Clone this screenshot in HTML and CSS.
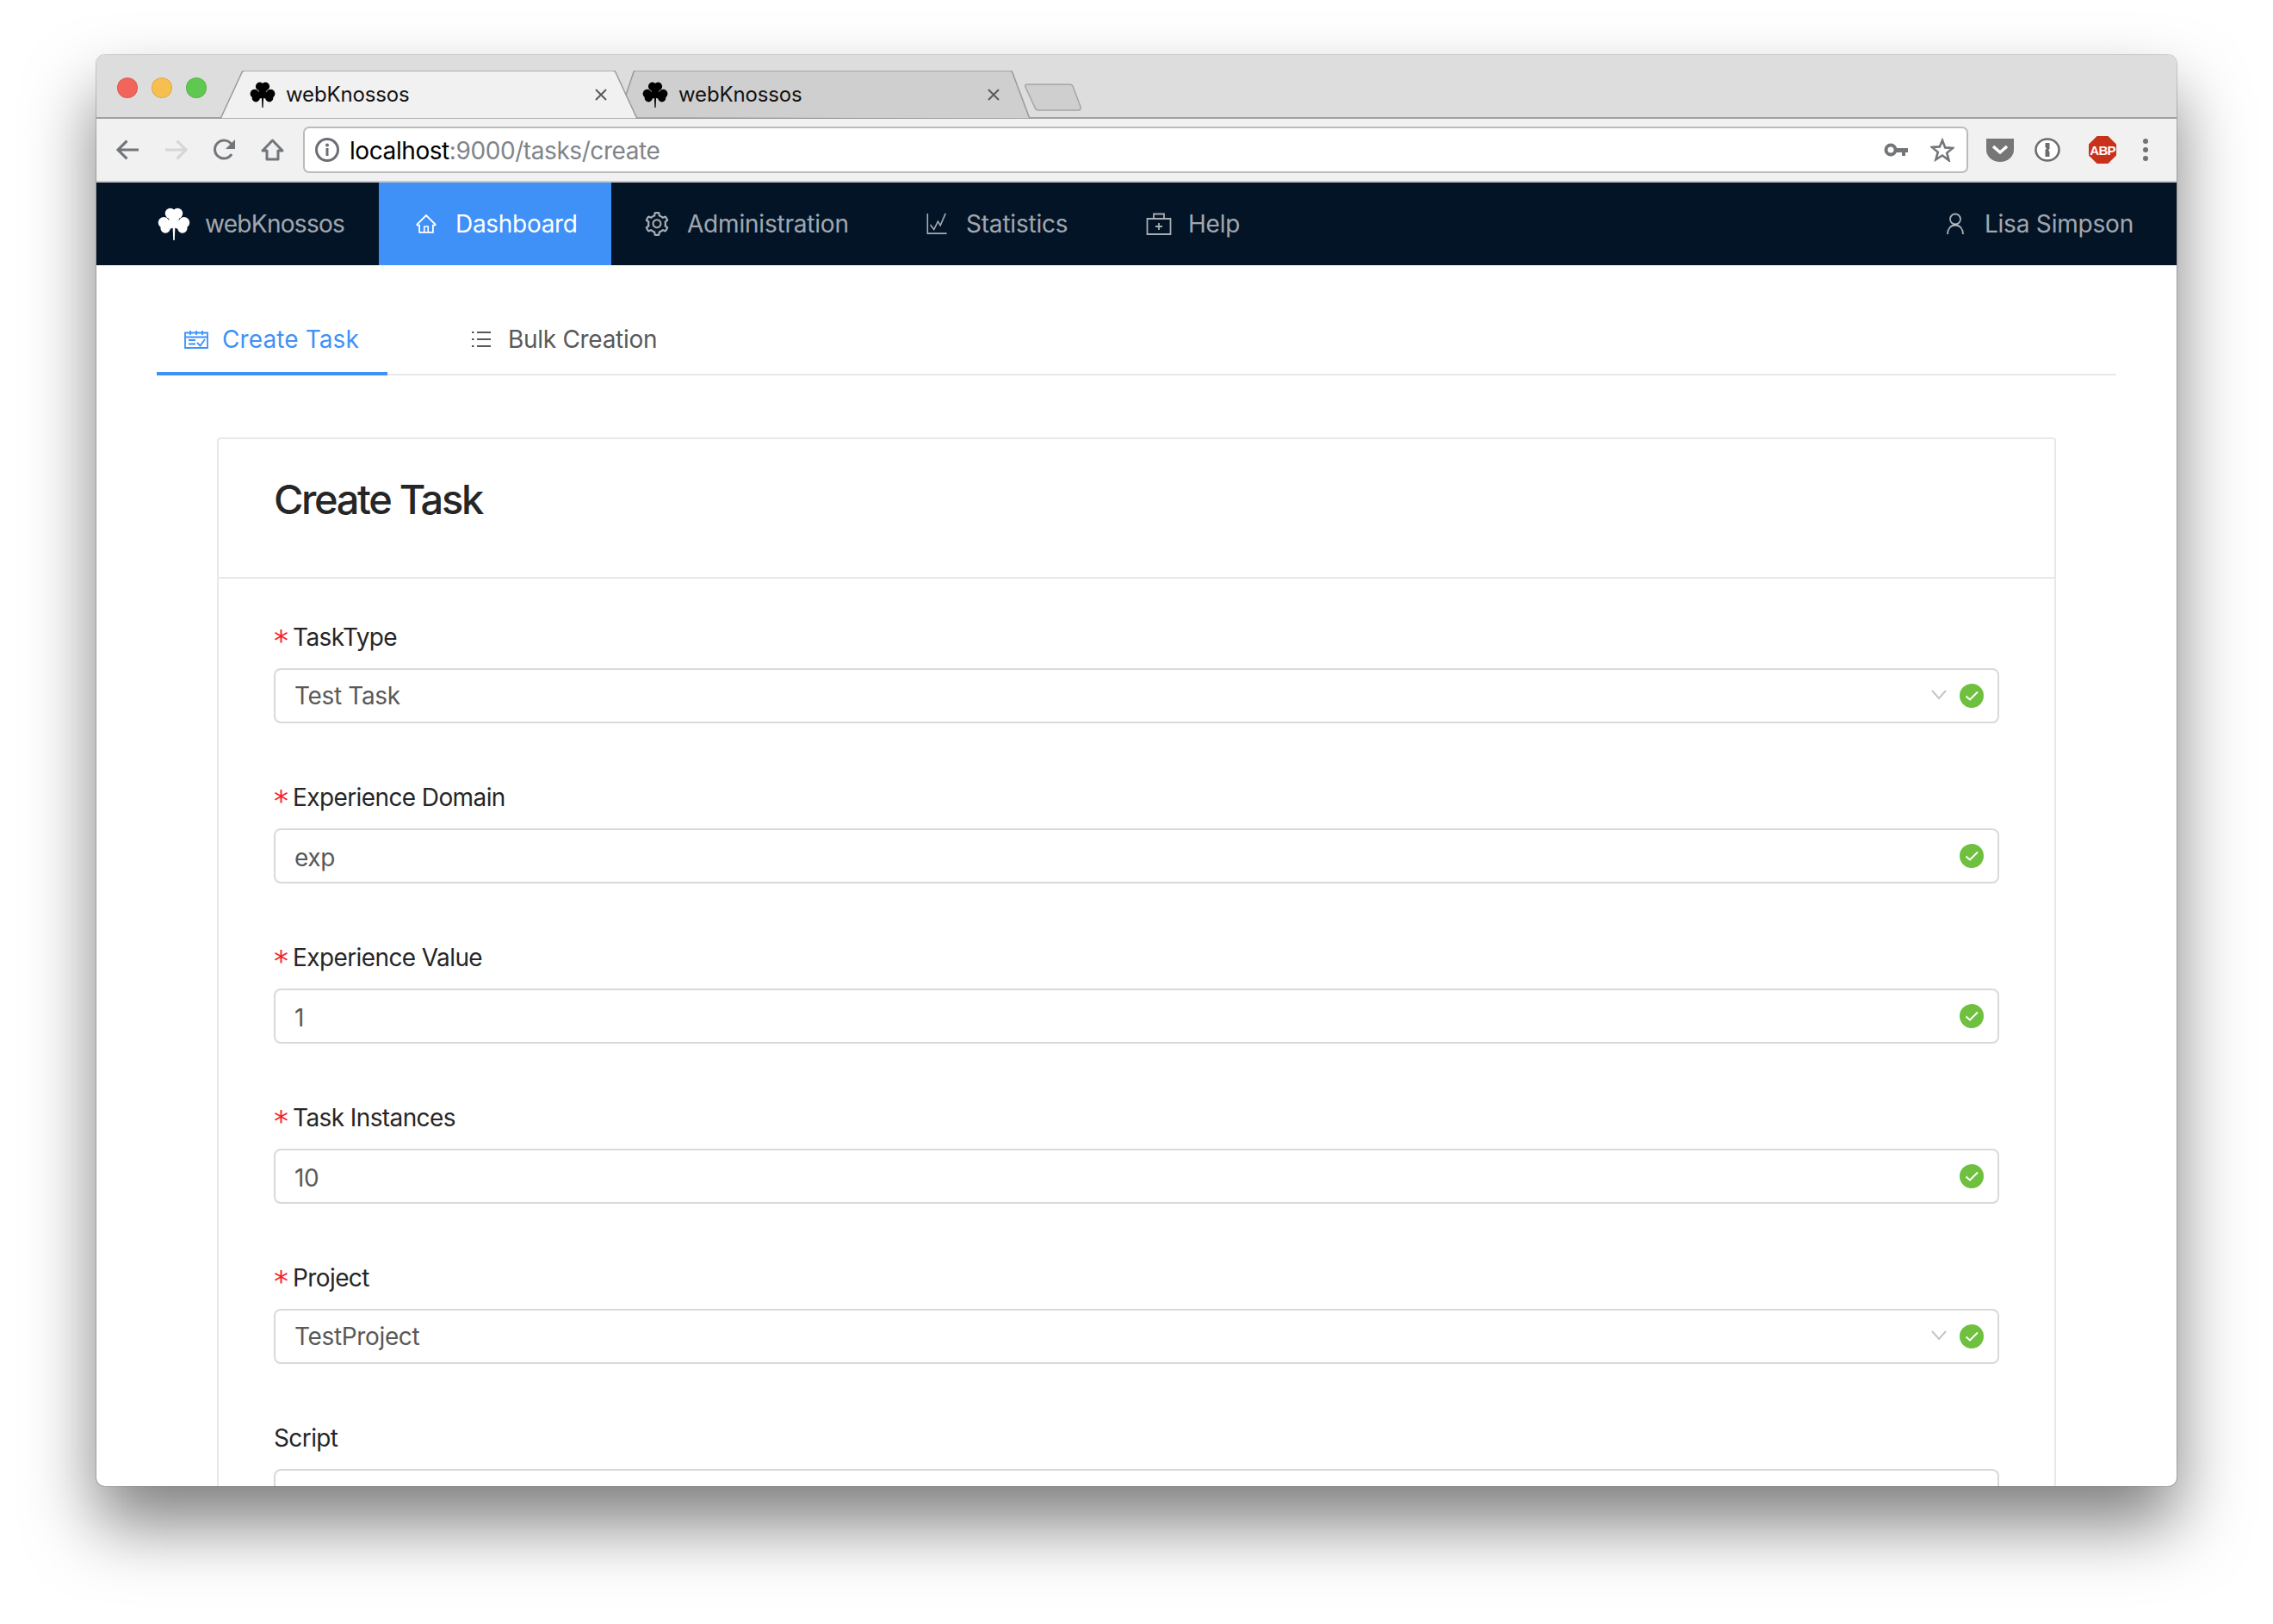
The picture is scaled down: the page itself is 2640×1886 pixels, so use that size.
FILE: index.html
```html
<!DOCTYPE html>
<html lang="en">
<head>
<meta charset="utf-8">
<title>webKnossos</title>
<link rel="stylesheet" href="styles.css">
</head>
<body>
<svg class="defs" width="0" height="0">
  <symbol id="clover" viewBox="0 0 100 100">
    <circle cx="39" cy="18" r="16"/><circle cx="61" cy="18" r="16"/>
    <circle cx="50" cy="32" r="16"/>
    <circle cx="19" cy="46" r="17"/><circle cx="24" cy="63" r="15"/>
    <circle cx="81" cy="46" r="17"/><circle cx="76" cy="63" r="15"/>
    <circle cx="38" cy="52" r="13"/><circle cx="62" cy="52" r="13"/>
    <path d="M46 50h8l-2 50h-4z"/>
  </symbol>
  <symbol id="ok" viewBox="0 0 28 28">
    <circle cx="14" cy="14" r="14" fill="#6fc03f"/>
    <path d="M7.500 14.500l4.500 4L21 9.500" fill="none" stroke="#fff" stroke-width="2"/>
  </symbol>
  <symbol id="chev" viewBox="0 0 18 12">
    <path d="M1 1l8 9 8-9" fill="none" stroke="#c4c4c4" stroke-width="2"/>
  </symbol>
  <symbol id="x" viewBox="0 0 16 16">
    <path d="M2 2l12 12M14 2L2 14" fill="none" stroke="#5a5a5a" stroke-width="2"/>
  </symbol>
</svg>

<div class="window">
  <div class="tabstrip">
    <div class="lights">
      <span class="light red"></span><span class="light amber"></span><span class="light green"></span>
    </div>
    <div class="tab inactive second">
      <svg class="tab-shape" viewBox="0 0 476 56" preserveAspectRatio="none"><path d="M0 55l10-24L20 1q1-1 3-1h430q2 0 3 2l20 54z" fill="#cfcfcf" stroke="#9a9a9a" stroke-width="1.500"/></svg>
      <svg class="favicon"><use href="#clover"/></svg><span class="tab-title">webKnossos</span><svg class="tab-x"><use href="#x"/></svg>
    </div>
    <div class="tab active">
      <svg class="tab-shape" viewBox="0 0 484 56" preserveAspectRatio="none"><path d="M0 56L25 2q1-2 3-2h428q2 0 3 2l25 54z" fill="#f1f1f1" stroke="#9a9a9a" stroke-width="1.500"/></svg>
      <svg class="favicon"><use href="#clover"/></svg><span class="tab-title">webKnossos</span><svg class="tab-x"><use href="#x"/></svg>
    </div>
    <svg class="newtab" viewBox="0 0 66 32"><path d="M3 1h49q3 0 4 2l9 24q1 4-3 4H16q-3 0-4-3L1 4Q0 1 3 1z" fill="#cfcfcf" stroke="#a5a5a5" stroke-width="1.500"/></svg>
  </div>

  <div class="toolbar">
    <div class="nav-buttons">
      <svg class="tb-icon" viewBox="0 0 26 24"><path d="M25 12H3M12 2L2 12l10 10" fill="none" stroke="#72757a" stroke-width="3"/></svg>
      <svg class="tb-icon" viewBox="0 0 26 24"><path d="M1 12h22M14 2l10 10-10 10" fill="none" stroke="#d6d6d6" stroke-width="3"/></svg>
      <svg class="tb-icon" viewBox="0 0 27 26"><path d="M22 18a10.500 10.500 0 1 1 0-11" fill="none" stroke="#72757a" stroke-width="3"/><path d="M26 1v11H15z" fill="#72757a"/></svg>
      <svg class="tb-icon" viewBox="0 0 27 26"><path d="M13.500 2L2 14h5v10h13V14h5z" fill="none" stroke="#72757a" stroke-width="3" stroke-linejoin="round"/></svg>
    </div>
    <div class="omnibox">
      <svg class="info" viewBox="0 0 28 28"><circle cx="14" cy="14" r="12.500" fill="none" stroke="#6b6e73" stroke-width="3"/><circle cx="14" cy="8.500" r="2" fill="#6b6e73"/><path d="M12.500 12h3v9h-3z" fill="#6b6e73"/></svg>
      <span class="url"><span class="host">localhost</span>:9000/tasks/create</span>
      <svg class="key" viewBox="0 0 28 16"><circle cx="8" cy="8" r="5.500" fill="none" stroke="#72757a" stroke-width="4"/><path d="M14 6h14v5h-3v4h-4v-4h-7z" fill="#72757a"/></svg>
      <svg class="star" viewBox="0 0 28 28"><path d="M14 3l3.200 8.400 9 .5-7 5.700 2.400 8.700L14 20.500l-7.600 4.800 2.400-8.700-7-5.700 9-.5z" fill="none" stroke="#72757a" stroke-width="2.600"/></svg>
    </div>
    <div class="extensions">
      <svg class="ext pocket" viewBox="0 0 32 28"><path d="M0 1h32v13a16 14 0 0 1-32 0z" fill="#767676"/><path d="M8 10l8 7 8-7" fill="none" stroke="#fff" stroke-width="3.500"/></svg>
      <svg class="ext onepw" viewBox="0 0 30 28"><ellipse cx="15" cy="14" rx="13.500" ry="12.500" fill="#fff" stroke="#6c6c6c" stroke-width="2.600"/><path d="M12.500 6h5v7l-1.500 1.500 1.500 1.500v6h-5v-8l1.500-1.500-1.500-1.500z" fill="#6c6c6c"/></svg>
      <div class="abp"><span>ABP</span></div>
      <div class="kebab"><i></i><i></i><i></i></div>
    </div>
  </div>

  <nav class="navbar">
    <a class="brand"><svg class="brand-icon"><use href="#clover"/></svg><span>webKnossos</span></a>
    <a class="menu-item selected">
      <svg class="menu-icon" viewBox="0 0 1024 1024"><path fill="currentColor" d="M946.5 505L560.1 118.8l-25.9-25.9a31.5 31.5 0 0 0-44.4 0L77.5 505a63.9 63.9 0 0 0-18.8 46c.4 35.2 29.7 63.3 64.9 63.3h42.5V940h691.8V614.3h43.4c17.1 0 33.2-6.7 45.3-18.8a63.6 63.6 0 0 0 18.7-45.3c0-17-6.7-33.1-18.8-45.2zM568 868H456V664h112v204zm217.9-325.7V868H632V640c0-22.1-17.9-40-40-40H432c-22.1 0-40 17.9-40 40v228H238.1V542.3h-96l370-369.7 23.1 23.1L882 542.3h-96.1z"/></svg>
      <span>Dashboard</span>
    </a>
    <a class="menu-item admin">
      <svg class="menu-icon" viewBox="0 0 1024 1024"><path fill="currentColor" d="M924.8 625.7l-65.5-56c3.1-19 4.7-38.4 4.7-57.8s-1.6-38.8-4.7-57.8l65.5-56a32.03 32.03 0 0 0 9.3-35.2l-.9-2.6a443.74 443.74 0 0 0-79.7-137.9l-1.8-2.1a32.12 32.12 0 0 0-35.1-9.5l-81.3 28.9c-30-24.6-63.5-44-99.7-57.6l-15.7-85a32.05 32.05 0 0 0-25.8-25.7l-2.7-.5c-52.1-9.4-106.9-9.4-159 0l-2.7.5a32.05 32.05 0 0 0-25.8 25.7l-15.8 85.4a351.86 351.86 0 0 0-99 57.4l-81.9-29.1a32 32 0 0 0-35.1 9.5l-1.8 2.1a446.02 446.02 0 0 0-79.7 137.9l-.9 2.6c-4.5 12.5-.8 26.5 9.3 35.2l66.3 56.6c-3.1 18.8-4.6 38-4.6 57.1 0 19.2 1.5 38.4 4.6 57.1L99 625.5a32.03 32.03 0 0 0-9.3 35.2l.9 2.6c18.1 50.4 44.9 96.9 79.7 137.9l1.8 2.1a32.12 32.12 0 0 0 35.1 9.5l81.9-29.1c29.8 24.5 63.1 43.9 99 57.4l15.8 85.4a32.05 32.05 0 0 0 25.8 25.7l2.7.5a449.4 449.4 0 0 0 159 0l2.7-.5a32.05 32.05 0 0 0 25.8-25.7l15.7-85a350 350 0 0 0 99.7-57.6l81.3 28.9a32 32 0 0 0 35.1-9.5l1.8-2.1c34.8-41.1 61.6-87.5 79.7-137.9l.9-2.6c4.5-12.3.8-26.3-9.3-35zM788.3 465.9c2.5 15.1 3.8 30.6 3.8 46.1s-1.3 31-3.8 46.1l-6.6 40.1 74.7 63.9a370.03 370.03 0 0 1-42.6 73.6L721 702.8l-31.4 25.8c-23.9 19.6-50.5 35-79.3 45.8l-38.1 14.3-17.9 97a377.5 377.5 0 0 1-85 0l-17.9-97.2-37.8-14.5c-28.5-10.8-55-26.2-78.7-45.7l-31.4-25.9-93.4 33.2c-17-22.9-31.2-47.6-42.6-73.6l75.5-64.5-6.5-40c-2.4-14.9-3.7-30.3-3.7-45.5 0-15.3 1.2-30.6 3.7-45.5l6.5-40-75.5-64.5c11.3-26.1 25.6-50.7 42.6-73.6l93.4 33.2 31.4-25.9c23.7-19.5 50.2-34.9 78.7-45.7l37.9-14.3 17.9-97.2c28.1-3.2 56.8-3.2 85 0l17.9 97 38.1 14.3c28.7 10.8 55.4 26.2 79.3 45.8l31.4 25.8 92.8-32.9c17 22.9 31.2 47.6 42.6 73.6L781.8 426l6.5 39.9zM512 326c-97.2 0-176 78.8-176 176s78.8 176 176 176 176-78.8 176-176-78.8-176-176-176zm79.2 255.2A111.6 111.6 0 0 1 512 614c-29.9 0-58-11.7-79.2-32.8A111.6 111.6 0 0 1 400 502c0-29.9 11.700-58 32.800-79.200C454 401.600 482.100 390 512 390c29.900 0 58 11.600 79.200 32.800A111.600 111.600 0 0 1 624 502c0 29.900-11.700 58-32.800 79.200z"/></svg>
      <span>Administration</span>
    </a>
    <a class="menu-item stats">
      <svg class="menu-icon" viewBox="0 0 26 28"><path d="M1.500 1v25h24M5 15l4.500 6 5-10 3 5L24 1" fill="none" stroke="currentColor" stroke-width="1.700"/></svg>
      <span>Statistics</span>
    </a>
    <a class="menu-item help">
      <svg class="menu-icon wide" viewBox="0 0 30 26"><path d="M1.500 7h27v18h-27zM9 7V1.500h12V7M15 12v8M11 16h8" fill="none" stroke="currentColor" stroke-width="1.800"/></svg>
      <span>Help</span>
    </a>
    <a class="menu-item user">
      <svg class="menu-icon" viewBox="0 0 20 26"><circle cx="10" cy="7.500" r="6" fill="none" stroke="currentColor" stroke-width="1.800"/><path d="M1 25c0-6 3.500-10.500 9-10.500S19 19 19 25" fill="none" stroke="currentColor" stroke-width="1.800"/></svg>
      <span>Lisa Simpson</span>
    </a>
  </nav>

  <main class="content">
    <div class="tabs">
      <div class="page-tab current">
        <svg class="page-tab-icon" viewBox="0 0 28 22"><path d="M1 3.500h26V21H1zM1 8.500h26M7 1v5M14 1v5M21 1v5M5 12h8M5 16.500h8M15 15l3.500 3.500L24 11" fill="none" stroke="currentColor" stroke-width="1.800"/></svg>
        <span>Create Task</span>
      </div>
      <div class="page-tab">
        <svg class="page-tab-icon list" viewBox="0 0 22 20"><path d="M6 2h16M6 10h16M6 18h16" fill="none" stroke="currentColor" stroke-width="1.800"/><path d="M0 1h2.500v2H0zM0 9h2.500v2H0zM0 17h2.500v2H0z" fill="currentColor"/></svg>
        <span>Bulk Creation</span>
      </div>
    </div>

    <section class="card">
      <header class="card-head"><h1>Create Task</h1></header>
      <form class="card-body">
        <div class="field">
          <label class="label"><span class="req">*</span>TaskType</label>
          <div class="control"><span class="value">Test Task</span><svg class="chev"><use href="#chev"/></svg><svg class="ok"><use href="#ok"/></svg></div>
        </div>
        <div class="field">
          <label class="label"><span class="req">*</span>Experience Domain</label>
          <div class="control"><span class="value typed">exp</span><svg class="ok"><use href="#ok"/></svg></div>
        </div>
        <div class="field">
          <label class="label"><span class="req">*</span>Experience Value</label>
          <div class="control"><span class="value typed">1</span><svg class="ok"><use href="#ok"/></svg></div>
        </div>
        <div class="field">
          <label class="label"><span class="req">*</span>Task Instances</label>
          <div class="control"><span class="value typed">10</span><svg class="ok"><use href="#ok"/></svg></div>
        </div>
        <div class="field">
          <label class="label"><span class="req">*</span>Project</label>
          <div class="control"><span class="value">TestProject</span><svg class="chev"><use href="#chev"/></svg><svg class="ok"><use href="#ok"/></svg></div>
        </div>
        <div class="field">
          <label class="label">Script</label>
          <div class="control"></div>
        </div>
      </form>
    </section>
  </main>
</div>
</body>
</html>
```

FILE: styles.css
```css
* { box-sizing: border-box; }
html, body { margin: 0; padding: 0; background: #fff; }
body {
  position: relative;
  width: 2640px;
  height: 1886px;
  padding: 64px 112px 160px;
  overflow: hidden;
  font-family: Inter, "Liberation Sans", sans-serif;
}
.defs { position: absolute; }

.window {
  width: 2416px;
  height: 1662px;
  border-radius: 10px;
  overflow: hidden;
  background: #fff;
  display: flex;
  flex-direction: column;
  box-shadow: 0 0 0 1px rgba(0,0,0,.18), 0 44px 80px rgba(0,0,0,.5);
}

/* tab strip */
.tabstrip {
  height: 74px;
  flex: none;
  background: #dddddd;
  border-bottom: 2px solid #a0a0a0;
  position: relative;
}
.lights { position: absolute; left: 24px; top: 26px; display: flex; gap: 16px; }
.light { width: 24px; height: 24px; border-radius: 50%; border: 1px solid rgba(0,0,0,.1); }
.red { background: #f1655b; }
.amber { background: #f7bf4f; }
.green { background: #5fc850; }

.tab {
  position: absolute;
  top: 18px;
  height: 56px;
  display: flex;
  align-items: center;
}
.tab.active { left: 144px; width: 484px; padding-left: 34px; }
.tab.second { left: 604px; width: 480px; padding-left: 30px; }
.tab-shape { position: absolute; left: 0; top: 0; width: 100%; height: 100%; }
.favicon { position: relative; width: 30px; height: 30px; fill: #000; flex: none; margin-right: 12px; margin-top: -1px; }
.tab-title { position: relative; font-size: 24px; letter-spacing: -.15px; color: #111; flex: 1; margin-top: -2px; }
.tab-x { position: relative; width: 16px; height: 16px; flex: none; margin-right: 34px; }
.newtab { position: absolute; left: 1078px; top: 33px; width: 66px; height: 32px; }

/* toolbar */
.toolbar {
  height: 74px;
  flex: none;
  background: #f1f1f1;
  border-bottom: 2px solid #c8c8c8;
  display: flex;
  align-items: center;
  padding-left: 23px;
}
.nav-buttons { display: flex; align-items: center; gap: 29px; width: 217px; flex: none; }
.tb-icon { width: 27px; height: 26px; flex: none; }
.omnibox {
  width: 1934px;
  height: 54px;
  flex: none;
  background: #fff;
  border: 2px solid #bbb;
  border-radius: 7px;
  display: flex;
  align-items: center;
  padding-left: 12px;
  margin-top: -1px;
}
.info { width: 28px; height: 28px; flex: none; margin-right: 12px; }
.url { font-size: 28px; color: #80848a; flex: 1; letter-spacing: -.42px; padding-top: 2px; }
.host { color: #000; }
.key { width: 28px; height: 16px; flex: none; margin-right: 26px; }
.star { width: 28px; height: 28px; flex: none; margin-right: 14px; }
.extensions { display: flex; align-items: center; padding-left: 21px; }
.ext { flex: none; height: 28px; }
.pocket { width: 32px; margin-right: 24px; }
.onepw { width: 30px; margin-right: 33px; }
.abp {
  width: 32px; height: 32px;
  background: #c8321a;
  clip-path: polygon(30% 0, 70% 0, 100% 30%, 100% 70%, 70% 100%, 30% 100%, 0 70%, 0 30%);
  display: flex; align-items: center; justify-content: center;
  color: #fff; font: bold 15px "Liberation Sans", sans-serif; letter-spacing: -.8px;
  margin-right: 31px;
}
.kebab { display: flex; flex-direction: column; gap: 4px; }
.kebab i { width: 6px; height: 6px; border-radius: 50%; background: #6f7276; display: block; }

/* navbar */
.navbar {
  height: 96px;
  flex: none;
  background: #031427;
  display: flex;
  align-items: stretch;
  color: rgba(255,255,255,.65);
  font-size: 28px;
  letter-spacing: -.2px;
}
.brand { display: flex; align-items: center; padding-left: 71px; width: 328px; flex: none; letter-spacing: -.7px; }
.brand-icon { width: 38px; height: 38px; fill: #fff; margin-right: 17px; flex: none; }
.menu-item { display: flex; align-items: center; padding: 0 40px; flex: none; }
.menu-icon { width: 26px; height: 26px; flex: none; margin-right: 21px; }
.menu-icon.wide { width: 30px; margin-right: 19px; }
.selected { background: #3f91f8; color: #fff; width: 270px; padding-left: 42px; letter-spacing: -.3px; }
.admin { width: 325px; }
.admin .menu-icon { width: 32px; height: 32px; margin-left: -3px; margin-right: 19px; }
.stats { width: 256px; }
.user { margin-left: auto; padding: 0 50px 0 0; }
.user .menu-icon { margin-right: 21px; }

/* content */
.content { padding: 0 70px; flex: none; }
.tabs {
  display: flex;
  height: 128px;
  align-items: stretch;
  padding-top: 47px;
  border-bottom: 2px solid #e8e8e8;
  margin-bottom: 72px;
  font-size: 28px;
  color: #595959;
  letter-spacing: -.3px;
}
.page-tab {
  display: flex;
  align-items: center;
  padding: 0 32px;
  width: 268px;
  margin-right: 66px;
  margin-bottom: -2px;
  border-bottom: 4px solid transparent;
  flex: none;
}
.page-tab:last-child { width: auto; }
.page-tab.current { color: #3f91f8; border-bottom-color: #3f91f8; letter-spacing: .1px; }
.page-tab-icon { width: 28px; height: 22px; flex: none; margin-right: 16px; }
.page-tab-icon.list { width: 22px; height: 20px; margin-right: 20px; }

.card { margin: 0 70px; border: 2px solid #e8e8e8; border-bottom: 0; border-radius: 4px 4px 0 0; }
.card-head { height: 162px; padding: 0 64px; display: flex; align-items: center; border-bottom: 2px solid #e8e8e8; }
.card-head h1 { margin: 0; font-size: 47px; font-weight: 500; letter-spacing: -2.35px; color: #262626; padding-bottom: 22px; }
.card-body { padding: 46px 64px 0; }
.field { height: 186px; }
.label { display: block; height: 58px; line-height: 45px; font-size: 28px; color: #262626; letter-spacing: -.6px; }
.req { color: #f5222d; font: 34px/1 "DejaVu Sans", sans-serif; margin-right: 5px; vertical-align: -6px; letter-spacing: 0; }
.control {
  height: 64px;
  border: 2px solid #d9d9d9;
  border-radius: 8px;
  padding: 0 16px 0 22px;
  display: flex;
  align-items: center;
  font-size: 28px;
  color: #595959;
  letter-spacing: -.35px;
}
.value { flex: 1; }
.value.typed { padding-top: 3px; }
.chev { width: 18px; height: 12px; flex: none; margin-right: 15px; margin-top: -2px; }
.ok { width: 28px; height: 28px; flex: none; margin-left: auto; }
```
